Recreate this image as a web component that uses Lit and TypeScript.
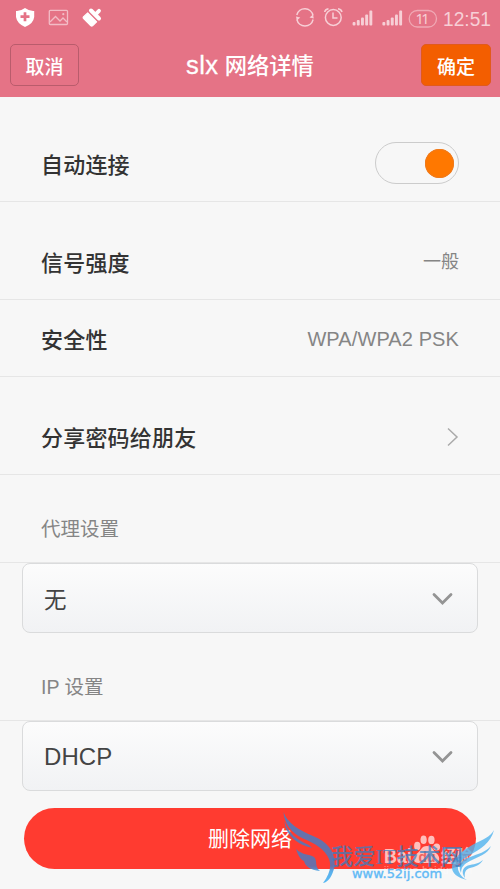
import { LitElement, html, css, svg } from "lit";
import { customElement, property } from "lit/decorators.js";

const signalBars = [3.5, 5.5, 8, 11, 15];

@customElement("status-bar")
class StatusBar extends LitElement {
  static styles = css`
    :host { display: flex; justify-content: space-between; height: 36px; }
    svg { display: block; }
    .time {
      font: 20px "Liberation Sans", sans-serif; fill: #f7cfd6;
    }
    .num { font: 14.5px "Noto Sans", sans-serif; fill: #f7cfd6; }
  `;
  private signal(x: number) {
    return signalBars.map(
      (h, i) => svg`<rect x=${x + i * 4.2} y=${25.5 - h} width="2.9" height=${h} rx="1" fill="#f7cfd6"/>`
    );
  }
  render() {
    return html`
      <svg width="120" height="36" viewBox="0 0 120 36">
        <path d="M25 8Q20 11.5 16 11V17Q17 23.5 25 27Q33.500 23.500 34.200 17V11Q30 11.500 25 8Z" fill="#fff"/>
        <path d="M25 12.200V21.200M20.500 16.700H29.500" stroke="#e57386" stroke-width="2.700"/>
        <rect x="49.300" y="10.300" width="18.200" height="14.200" rx="1" fill="none" stroke="#f3bcc6" stroke-width="1.300"/>
        <path d="M50 22L55.500 16.500L60 21L63 18L67 22" fill="none" stroke="#f3bcc6" stroke-width="1.300"/>
        <circle cx="63.300" cy="14.200" r="1.100" fill="#f3bcc6"/>
        <g fill="#fff" stroke="#fff" stroke-linejoin="round" stroke-linecap="round">
          <path d="M87.700 12.900L96.600 21.800L92.500 25.800Q91.700 26.400 90.900 25.800L83.400 18.300Q82.900 17.600 83.400 16.900Z" stroke-width="1.200"/>
          <path d="M91 10.500L99 18.500" fill="none" stroke-width="4"/>
          <path d="M95.500 14.300L99 10.800" fill="none" stroke-width="3.800"/>
        </g>
      </svg>
      <svg width="210" height="36" viewBox="290 0 210 36">
        <g fill="none" stroke="#f7cfd6" stroke-width="1.500">
          <path d="M296.800 15A8.300 8.300 0 0 1 313 15.500M313.100 19.500A8.300 8.300 0 0 1 296.900 19.500"/>
          <circle cx="333.300" cy="17.500" r="7.900"/>
          <path d="M333 12.500V18H337.500M324.700 12Q325 9.500 328.500 8.800M338 8.800Q341.500 9.500 342 12"/>
          <rect x="409.200" y="10.500" width="27.300" height="16.500" rx="8.200" stroke="#f0a9b5" stroke-width="1.300"/>
        </g>
        <path d="M313.800 18.500L309.500 17.500L313 14.500ZM296 16.500L300.300 17.500L296.800 20.500Z" fill="#f7cfd6"/>
        ${this.signal(352.6)}${this.signal(382.4)}
        <text class="num" x="415.500" y="24" textLength="14" lengthAdjust="spacing">11</text>
        <text class="time" x="443" y="26" textLength="48" lengthAdjust="spacingAndGlyphs">12:51</text>
      </svg>`;
  }
}

@customElement("detail-row")
class DetailRow extends LitElement {
  @property() label = "";
  @property() value = "";
  static styles = css`
    :host {
      display: flex; align-items: center; justify-content: space-between;
      box-sizing: border-box; height: 77px; padding: 0 41px;
      border-bottom: 1px solid #e6e6e6;
    }
    .label { font-size: 22px; font-weight: 500; color: #333; letter-spacing: 0.2px; line-height: 32px; padding-top: 5px; }
    .value { font-size: 20px; color: #858585; letter-spacing: 0.1px; line-height: 30px; padding-top: 2px; }
    .cjk { font-size: 18px; letter-spacing: 0; }
    ::slotted(svg) { margin-top: 1px; }
  `;
  render() {
    return html`<span class="label">${this.label}</span>
      ${this.value
        ? html`<span class="value ${/[A-Z]/.test(this.value) ? "" : "cjk"}">${this.value}</span>`
        : html`<slot></slot>`}`;
  }
}

@customElement("select-box")
class SelectBox extends LitElement {
  @property() value = "";
  static styles = css`
    :host {
      display: flex; align-items: center; justify-content: space-between;
      box-sizing: border-box; height: 70px; margin: 0 22px; padding: 2px 24px 0 21px;
      border: 1px solid #dadbdc; border-radius: 8px;
      background: linear-gradient(#fcfcfc, #f1f2f4);
      color: #444; font-size: 22.500px;
    }
    .cjk { padding-bottom: 3px; }
    .latin { font-size: 24px; letter-spacing: 0.1px; }
  `;
  render() {
    return html`<span class=${/[A-Z]/.test(this.value) ? "latin" : "cjk"}>${this.value}</span>
      <svg width="21" height="14" viewBox="0 0 21 14">
        <path d="M2 2.500L10.500 11L19 2.500" fill="none" stroke="#949494" stroke-width="2.800" stroke-linecap="round"/>
      </svg>`;
  }
}

@customElement("water-mark")
class WaterMark extends LitElement {
  static styles = css`
    :host { position: absolute; left: 270px; top: 800px; pointer-events: none; }
    svg { display: block; }
    .baidu { font: bold 20px "Liberation Sans", sans-serif; fill: #fff; }
    .small { font: bold 17px "Noto Sans CJK SC", sans-serif; fill: #fff; }
    .host { font: 10px "Liberation Sans", sans-serif; fill: #fff; }
    .du { font: bold 14px "Liberation Sans", sans-serif; fill: #ee5450; }
    .name { font: 500 22px "Liberation Serif", "Noto Sans CJK SC", serif; fill: #347fc4; }
    .url { font: 13px "DejaVu Sans", sans-serif; fill: #40adf5; stroke: #40adf5; stroke-width: 0.4px; }
  `;
  render() {
    return html`<svg width="230" height="89" viewBox="270 800 230 89">
      <defs>
        <linearGradient id="wing" x1="0" y1="812" x2="0" y2="884" gradientUnits="userSpaceOnUse">
          <stop offset="0" stop-color="#477fc6"/><stop offset=".75" stop-color="#5278bb"/><stop offset=".83" stop-color="#41a5ea"/><stop offset="1" stop-color="#41b2f5"/>
        </linearGradient>
      </defs>
      <text class="host" x="384" y="874" textLength="88" opacity=".45">jingyan.baidu.com</text>
      <g opacity=".68">
        <text class="baidu" x="384" y="863" textLength="28" lengthAdjust="spacingAndGlyphs">Bai</text>
        <g fill="#fff">
          <ellipse cx="417.300" cy="846" rx="3.200" ry="4.200"/>
          <ellipse cx="423.600" cy="839.800" rx="3.100" ry="4.300"/>
          <ellipse cx="431.400" cy="839.900" rx="3.200" ry="4.200"/>
          <ellipse cx="436.700" cy="847" rx="3.400" ry="3.500"/>
          <path d="M427 846C421 846 421 851 416.500 854C411 858 414 863.500 419 863H433C440 864 441 857 436.500 853.500C433 851 433 846 427 846Z"/>
        </g>
        <text class="small" x="441" y="862" textLength="31" lengthAdjust="spacingAndGlyphs">经验</text>
      </g>
      <text class="du" x="418.500" y="861.500" opacity=".85">du</text>
      <g fill="url(#wing)" opacity=".86">
        <path d="M283.500 812C287 823 299 830 313 836C328 842 336 852 334.500 867C332 876 329 882 323 883C329 875 332 867 329 859C325 849 314 843 303 838.500C291 833 284 823 283.500 812Z"/>
        <path d="M284.500 821C288 833 297 840 309 845L312 848C298 845 285 835 284.500 821Z"/>
        <path d="M296 849C302 855 309 854 314 857C318 861 314 866 320 871C310 870 305 866 304 861C300 859 298 855 296 849Z"/>
      </g>
      <g fill="#52b4ef" opacity=".8">
        <path d="M494 830C491 843 480 849 470 855C459 861 456 866 459 872C461 876 463 878 467 880C458 878 451 873 452 866C454 856 464 850 474 844C484 839 490 837 494 830Z"/>
        <path d="M491 846C488 854 478 857 470 861C464 864 461 867 461 873C457 864 463 859 470 857C478 854 486 852 491 846Z"/>
        <path d="M483 860C480 865 475 867 470 868C466 869 464 872 465 878C460 871 464 866 470 865C476 864 479 863 483 860Z"/>
      </g>
      <text class="name" x="331" y="864" textLength="132" lengthAdjust="spacingAndGlyphs" opacity=".72">我爱IT技术网</text>
      <text class="url" x="352" y="878" textLength="90" lengthAdjust="spacingAndGlyphs" opacity=".82">www.52ij.com</text>
    </svg>`;
  }
}

@customElement("app-root")
class AppRoot extends LitElement {
  static styles = css`
    :host {
      display: block; position: relative; box-sizing: border-box; height: 889px; overflow: hidden;
      background: #f7f7f7; font-family: "Liberation Sans", "Noto Sans CJK SC", sans-serif;
    }
    header { height: 97px; background: #e57386; }
    .bar { display: flex; justify-content: space-between; align-items: center; padding: 8px 9px 0 10px; }
    .btn {
      display: flex; align-items: center; justify-content: center; box-sizing: border-box;
      width: 69px; height: 42px; border: 1px solid #b95c6c; border-radius: 5px;
      color: #fff; font-size: 19px; font-weight: 500;
    }
    .ok { width: 70px; background: #f35e00; border-color: #e15a1c; }
    .title { font-size: 22.300px; font-weight: 500; color: #fff; padding-bottom: 2px; }
    .latin { font-size: 25.500px; letter-spacing: 0.4px; -webkit-text-stroke: 0.3px #fff; }
    .rows { padding-top: 28px; }
    .spaced { margin-top: 21px; }
    .toggle {
      display: flex; justify-content: flex-end; align-items: center; box-sizing: border-box;
      width: 84px; height: 42px; padding-right: 4px; border: 1px solid #ccc; border-radius: 21px;
    }
    .knob { width: 29px; height: 29px; border-radius: 50%; background: #ff7800; box-shadow: inset 0 0 0 1px #ef7a1c; }
    .caption {
      display: flex; align-items: flex-end; box-sizing: border-box; height: 88px; padding: 0 41px 19px;
      border-bottom: 1px solid #e6e6e6; color: #858585; font-size: 19.500px; line-height: 28px;
    }
    .delete {
      display: flex; align-items: center; justify-content: center; box-sizing: border-box;
      height: 61px; margin: 17px 24px 0; padding-bottom: 3px; border-radius: 31px;
      background: #ff3b30; color: #fff; font-size: 21px;
    }
  `;
  render() {
    return html`
      <header>
        <status-bar></status-bar>
        <div class="bar">
          <div class="btn">取消</div>
          <div class="title"><span class="latin">slx</span> 网络详情</div>
          <div class="btn ok">确定</div>
        </div>
      </header>
      <div class="rows">
        <detail-row label="自动连接"><div class="toggle"><div class="knob"></div></div></detail-row>
        <detail-row class="spaced" label="信号强度" value="一般"></detail-row>
        <detail-row label="安全性" value="WPA/WPA2 PSK"></detail-row>
        <detail-row class="spaced" label="分享密码给朋友">
          <svg width="12" height="20" viewBox="0 0 12 20">
            <path d="M1 1.500L10 10L1 18.500" fill="none" stroke="#aaa" stroke-width="1.500"/>
          </svg>
        </detail-row>
      </div>
      <div class="caption">代理设置</div>
      <select-box value="无"></select-box>
      <div class="caption">IP 设置</div>
      <select-box value="DHCP"></select-box>
      <div class="delete">删除网络</div>
      <water-mark></water-mark>`;
  }
}
